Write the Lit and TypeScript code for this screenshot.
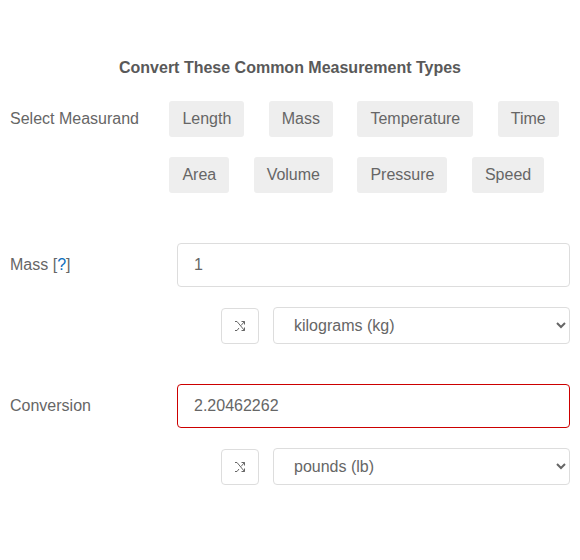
import { LitElement, html, css } from "lit";
import { customElement } from "lit/decorators.js";

const shuffle = html`<svg class="ico" viewBox="0 0 12 12" width="12" height="12" fill="none" stroke="#666" stroke-width="1">
  <path d="M1 1.5L3 1.5L10.5 10.5" /><path d="M1 10.5L3 10.5L5 8M7 5.5L10.5 1.5" />
  <path d="M7.5 1.5H10.5V4.5M7.5 10.5H10.5V7.5" />
</svg>`;

@customElement("app-root")
export class AppRoot extends LitElement {
  static styles = css`
    :host {
      display: block;
      width: 580px;
      height: 560px;
      background: #fff;
      color: #666;
      font-family: "Liberation Sans", Arial, sans-serif;
      font-size: 16px;
      box-sizing: border-box;
      padding: 59px 10px 0;
      overflow: hidden;
    }
    h1 {
      margin: 0 0 24px;
      font-size: 16px;
      line-height: 18px;
      font-weight: 700;
      text-align: center;
      color: #595959;
    }
    .measurand {
      display: flex;
      margin-bottom: 50px;
    }
    .measurand .label {
      width: 159px;
      flex: none;
      line-height: 36px;
    }
    .pills {
      display: flex;
      flex-direction: column;
      gap: 20px;
      padding-left: 0.4px;
    }
    .pill-row {
      display: flex;
      gap: 24.45px;
    }
    .pill {
      height: 36px;
      line-height: 36px;
      padding: 0 13px;
      background: #eee;
      border-radius: 3px;
      white-space: nowrap;
    }
    .field {
      display: flex;
      align-items: center;
    }
    .field .label {
      width: 167px;
      flex: none;
    }
    .field a {
      color: #0a6ebd;
      text-decoration: none;
    }
    input {
      flex: none;
      width: 393px;
      height: 44px;
      box-sizing: border-box;
      border: 1px solid #ddd;
      border-radius: 4px;
      padding: 0 16px;
      font: inherit;
      color: #666;
      background: #fff;
      outline: none;
    }
    input.result {
      border-color: #c00;
    }
    .unit {
      display: flex;
      align-items: center;
      justify-content: flex-end;
      gap: 14px;
      margin-top: 20px;
      margin-bottom: 40px;
    }
    .swap {
      width: 38px;
      height: 36px;
      box-sizing: border-box;
      border: 1px solid #ddd;
      border-radius: 4px;
      background: #fff;
      display: flex;
      align-items: center;
      justify-content: center;
      padding: 0;
    }
    .ico {
      display: block;
    }
    select {
      width: 297px;
      height: 37px;
      box-sizing: border-box;
      border: 1px solid #ddd;
      border-radius: 4px;
      background: #fff;
      color: #666;
      font: inherit;
      padding: 0 16px;
      outline: none;
    }
  `;

  private row(items: string[]) {
    return html`<div class="pill-row">${items.map((i) => html`<div class="pill">${i}</div>`)}</div>`;
  }

  render() {
    return html`
      <h1>Convert These Common Measurement Types</h1>
      <div class="measurand">
        <div class="label">Select Measurand</div>
        <div class="pills">
          ${this.row(["Length", "Mass", "Temperature", "Time"])}
          ${this.row(["Area", "Volume", "Pressure", "Speed"])}
        </div>
      </div>
      <div class="field">
        <div class="label">Mass [<a href="#">?</a>]</div>
        <input type="text" .value=${"1"} />
      </div>
      <div class="unit">
        <button class="swap">${shuffle}</button>
        <select><option>kilograms (kg)</option></select>
      </div>
      <div class="field">
        <div class="label">Conversion</div>
        <input class="result" type="text" .value=${"2.20462262"} />
      </div>
      <div class="unit">
        <button class="swap">${shuffle}</button>
        <select><option>pounds (lb)</option></select>
      </div>
    `;
  }
}
